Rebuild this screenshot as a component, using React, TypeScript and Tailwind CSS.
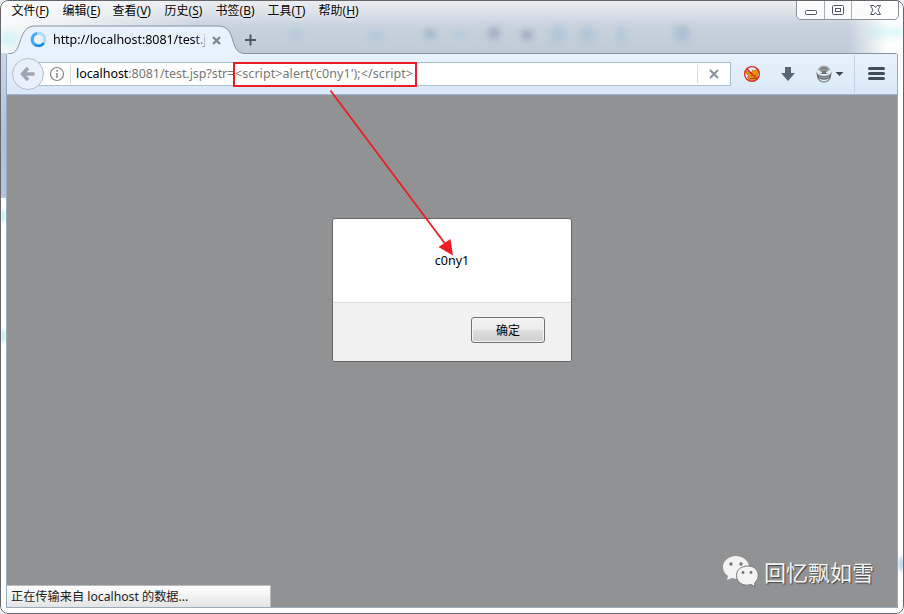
import React from "react";

const menus = [
  { label: "文件", key: "F", width: "w-[51px]" },
  { label: "编辑", key: "E", width: "w-[50px]" },
  { label: "查看", key: "V", width: "w-[52px]" },
  { label: "历史", key: "S", width: "w-[51px]" },
  { label: "书签", key: "B", width: "w-[52px]" },
  { label: "工具", key: "T", width: "w-[51px]" },
  { label: "帮助", key: "H", width: "w-[52px]" },
];

const glows = [
  "left-[290px] top-[27px] w-3 h-3 bg-[#9bbfda]/30",
  "left-[368px] top-[31px] w-4 h-2 bg-[#9bbfda]/40",
  "left-[424px] top-[30px] w-3 h-2 bg-[#8fa5bf]/70",
  "left-[454px] top-[32px] w-3 h-1 bg-[#9bbfda]/60",
  "left-[488px] top-[27px] w-3 h-3 bg-[#8795b0]/60",
  "left-[521px] top-[31px] w-3 h-2 bg-[#8795b0]/70",
  "left-[550px] top-[26px] w-4 h-4 bg-[#9fbdd5]/50",
  "left-[579px] top-[26px] w-4 h-4 bg-[#9fbdd5]/50",
  "left-[617px] top-[26px] w-2 h-4 bg-[#9fbdd5]/50",
  "left-[674px] top-[25px] w-4 h-4 bg-[#94afc9]/50",
];

function MenuBar() {
  return (
    <div className="flex h-[22px] pl-[11.500px] text-[12px] leading-[22px] text-black [text-shadow:0_0_5px_white]">
      {menus.map((m) => (
        <div key={m.key} className={`${m.width} shrink-0 whitespace-nowrap`}>
          {m.label}(<span className="underline underline-offset-2">{m.key}</span>)
        </div>
      ))}
    </div>
  );
}

function WindowButtons() {
  return (
    <div className="absolute right-[5px] top-0 z-10 flex h-[20px] w-[103px] rounded-b-[5px] border border-[#8b929b] bg-white/85">
      <div className="w-[28px] border-r border-[#a9b0b8]">
        <svg width="27" height="18"><rect x="8.5" y="9.500" width="11" height="4" rx="1" fill="white" stroke="#505668" /></svg>
      </div>
      <div className="w-[27px] border-r border-[#a9b0b8]">
        <svg width="26" height="18" fill="white" stroke="#505668"><rect x="7.500" y="4.500" width="11" height="9" rx="1" /><rect x="10.500" y="7.500" width="5" height="3" /></svg>
      </div>
      <div className="grow">
        <svg width="46" height="18"><path d="M18.500 4.500H22L23.500 6.500L25 4.500H28.500L26 9L28.500 13.500H25L23.500 11.500L22 13.500H18.500L21 9Z" fill="white" stroke="#505668" /></svg>
      </div>
    </div>
  );
}

function TabStrip() {
  return (
    <div className="relative flex h-[32px] items-center">
      <svg className="absolute left-0 top-0" width="904" height="32">
        <path d="M6 32C6.500 31.500 7 31.500 10 31.500C23 31.500 17 4 35 4H218C238 4 228 31.500 245 31.500H895Q898 31.500 898 34V36H6Z" fill="#e8f2fc" />
        <path d="M6.500 34Q6.500 31.500 10 31.500C23 31.500 17 4 35 4H218C238 4 228 31.500 245 31.500H895Q898 31.500 898 34" fill="none" stroke="#87929e" />
      </svg>
      <div className="relative flex items-center pl-[30px] pt-[4px]">
        <svg width="18" height="18" viewBox="0 0 18 18" fill="none" strokeWidth="3">
          <circle cx="8.500" cy="8.500" r="6.300" stroke="#b3dbfb" />
          <path d="M7 2.400A6.300 6.300 0 0 0 6 14.300" stroke="#45a7f5" />
          <path d="M5 13.700A6.300 6.300 0 0 0 13.800 12" stroke="#168aeb" strokeWidth="2.500" />
        </svg>
        <span className="ml-[5px] w-[152px] whitespace-nowrap text-[12.500px] leading-[18px] tracking-[-0.060px] text-black [mask-image:linear-gradient(to_right,black_93%,transparent_103%)]">
          http://localhost:8081/test.j
        </span>
        <svg className="ml-[6px]" width="11" height="11"><path d="M2 2L9 9M9 2L2 9" stroke="#7a8897" strokeWidth="2.300" /></svg>
        <svg className="ml-[22px]" width="14" height="14"><path d="M6.500 1.500V12.500M1 7H12" stroke="#4c5866" strokeWidth="2" /></svg>
      </div>
    </div>
  );
}

function BlockedIcon() {
  return (
    <svg width="18" height="18" viewBox="0 0 18 18">
      <path d="M3 6L6 7L7 9L9 7L9.500 5L11 6L13 5L14 3.500L15.500 7L14.500 10L15 13L11 15.500L6 15L4.500 12L6 10L3.500 9Z" fill="#ed930d" stroke="#b76212" strokeWidth=".7" />
      <path d="M8 11H9.500M12 10H13M7 13.500H12" stroke="#8c4b1b" />
      <circle cx="9" cy="9" r="7.400" fill="none" stroke="#d92921" strokeWidth="1.300" />
      <path d="M3.700 3.700L14.300 14.300" stroke="#d92921" strokeWidth="1.500" />
    </svg>
  );
}

function NavBar() {
  return (
    <div className="flex h-[41px] items-center border-b border-[#9bb5d0] bg-linear-to-b from-[#e8f2fc] to-[#dae9f7]">
      <div className="relative z-10 ml-[5px] flex size-[32px] shrink-0 items-center justify-center rounded-full border border-[#b2bfcd] bg-[#e8f0f9]">
        <svg width="18" height="18"><path d="M9 3L3.500 9L9 15M4 9H15.500" fill="none" stroke="#9ea7b1" strokeWidth="3.500" /></svg>
      </div>
      <div className="-ml-[5px] flex h-[24px] w-[692px] shrink-0 items-center border border-[#a9bed2] bg-white">
        <svg className="ml-[9px]" width="16" height="16" fill="none" stroke="#858585"><circle cx="8" cy="8" r="6.500" strokeWidth="1.200" /><path d="M8 7V12M8 4V5.700" strokeWidth="1.500" /></svg>
        <div className="ml-[5px] h-[17px] w-px bg-[#d5d5d5]" />
        <div className="ml-[5px] w-[157px] shrink-0 whitespace-nowrap text-[12.500px] leading-[22px] tracking-[-0.060px] text-[#777]">
          <span className="text-black">localhost</span>:8081/test.jsp?str=
        </div>
        <div className="relative z-10 flex h-[25px] w-[184px] shrink-0 items-center whitespace-nowrap border-2 border-[#ed1c24] text-[12.500px] tracking-[0.080px] text-[#777]">
          &lt;script&gt;alert('c0ny1');&lt;/script&gt;
        </div>
        <div className="ml-auto h-[18px] w-px bg-[#ddd]" />
        <div className="flex w-[32px] justify-center">
          <svg width="12" height="12"><path d="M2 2L10 10M10 2L2 10" stroke="#8592a1" strokeWidth="2" /></svg>
        </div>
      </div>
      <div className="ml-[12px]"><BlockedIcon /></div>
      <svg className="ml-[19px]" width="16" height="16"><path d="M5 1H11V7H15L8 15L1 7H5Z" fill="#586574" /></svg>
      <svg className="ml-[20px]" width="30" height="18">
        <path d="M1.800 5.500Q4 1 8 1Q12 1 14.200 5.500" fill="none" stroke="#a2a5a8" strokeWidth="1.200" />
        <ellipse cx="8" cy="4.500" rx="4.500" ry="2.800" fill="#7d8082" />
        <path d="M6 6H10V8L13 9H3L6 8Z" fill="#707375" />
        <path d="M.5 6.500Q1.500 11 8 11Q14.500 11 15.500 6.500Q16 13 12 14Q8 15.500 4 14Q0 13 .5 6.500Z" fill="#686b6d" />
        <path d="M1.500 12.500Q4 17 8 17Q12 17 14.500 12.500" fill="none" stroke="#85888a" strokeWidth="1.300" />
        <path d="M4.500 5H11.500M3 12Q8 13.500 13 12" fill="none" stroke="#b4b6b8" strokeWidth=".8" />
        <path d="M19.500 7H27.500L23.500 11Z" fill="#394552" />
      </svg>
      <div className="ml-[8px] h-[38px] w-px bg-[#c4d3e1]" />
      <svg className="ml-[12.500px]" width="17" height="16"><path d="M1.500 2.500H15.500M1.500 7.500H15.500M1.500 12.500H15.500" stroke="#404d5b" strokeWidth="3" strokeLinecap="round" /></svg>
    </div>
  );
}

function AlertDialog() {
  return (
    <div className="absolute left-[325px] top-[123px] flex h-[144px] w-[240px] flex-col overflow-hidden rounded-[3px] border border-[#666] bg-white">
      <div className="flex h-[83px] items-center justify-center pt-[2px] text-[12.500px] text-black">c0ny1</div>
      <div className="flex grow items-start justify-end border-t border-[#ddd] bg-[#f1f1f1] pr-[26px] pt-[14px]">
        <button className="h-[26px] w-[74px] rounded-[3px] border border-[#707070] bg-[linear-gradient(#f3f3f3,#ebebeb_48%,#dddddd_50%,#cfcfcf)] text-[12px] leading-[23px] text-black shadow-[inset_0_0_0_1px_#f6f6f6]">确定</button>
      </div>
    </div>
  );
}

function Signature() {
  return (
    <div className="absolute left-[716px] top-[459px] flex items-center text-[#f4f4f4]">
      <svg width="37" height="36" viewBox="0 0 37 36">
        <path d="M13 2C5.500 2 0 7 0 13C0 17 2 20 5 22L4 26L9 24C17 27 27 21 26 13C26 7 20 2 13 2Z" fill="#f3f3f3" />
        <path d="M25 12C18 12 13.500 16 13.500 21.500C13.500 28 20 33 28 30.500L32 33L31.500 29C38 24 36 12 25 12Z" fill="#f3f3f3" stroke="#777" />
        <g fill="#737373"><circle cx="8" cy="10" r="1.700" /><circle cx="18" cy="10" r="1.700" /><circle cx="20" cy="18.500" r="1.400" /><circle cx="28" cy="18.500" r="1.400" /></g>
      </svg>
      <span className="ml-[4px] whitespace-nowrap text-[22px] leading-[36px] [text-shadow:1px_1px_1px_#444]">回忆飘如雪</span>
    </div>
  );
}

export default function App() {
  return (
    <div className="h-[614px] w-[904px] bg-[#eee] font-['Noto_Sans','Noto_Sans_CJK_SC',sans-serif]">
      <div className="relative h-[614px] overflow-hidden rounded-[8px] bg-white">
        <div className="absolute inset-x-0 top-0 h-[54px] bg-linear-to-b from-[#eceef1] via-[#c8d2dd] via-50% to-[#bdcad6]" />
        <div className="absolute left-0 top-0 h-[54px] w-[200px] bg-linear-to-r from-white/90 via-white/50 to-transparent" />
        <div className="absolute right-0 top-0 h-[54px] w-[55px] bg-linear-to-r from-transparent to-white to-70%" />
        <div className="absolute left-0 top-[53px] h-[145px] w-[6px] bg-linear-to-b from-[#c8d8ec] via-[#adc0dc] via-60% to-[#b5c5dd]" />
        <div className="absolute left-0 top-[32px] h-[14px] w-[18px] bg-[#b6eef4]/60 blur-[4px]" />
        <div className="absolute right-0 top-[28px] h-[8px] w-[38px] bg-[#b6eef4]/60 blur-[4px]" />
        <div className="absolute left-0 top-[210px] h-[12px] w-[6px] bg-[#c5f2f5] blur-[2px]" />
        <div className="absolute left-0 top-[330px] h-[12px] w-[6px] bg-[#c5eaf2] blur-[2px]" />
        <div className="absolute right-0 top-[558px] h-[12px] w-[5px] bg-[#a8ccef] blur-[2px]" />
        {glows.map((g) => <div key={g} className={`absolute rounded-full blur-[3px] ${g}`} />)}
        <div className="relative flex h-full flex-col">
          <MenuBar />
          <TabStrip />
          <div className="mx-[6px] flex h-[554px] flex-col border-x border-b border-[#9aabbc]">
            <NavBar />
            <div className="relative h-[512px] bg-[#919293] bg-[repeating-conic-gradient(#8f9091_0%_25%,#939495_0%_50%)] bg-size-[4px_4px]">
              <AlertDialog />
              <Signature />
              <div className="absolute bottom-0 left-0 h-[22px] w-[264px] border-r border-t border-[#bbb] bg-linear-to-b from-white to-[#e4e4e4] pl-[4px] text-[12.200px] leading-[21px] text-[#222]">正在传输来自 localhost 的数据...</div>
            </div>
          </div>
        </div>
        <WindowButtons />
        <div className="pointer-events-none absolute inset-0 z-20 rounded-[8px] border border-[#65666d]" />
        <svg className="absolute left-0 top-0 z-20" width="904" height="614">
          <path d="M330.500 90.500L446 245" stroke="#ed1c24" strokeWidth="1.800" />
          <path d="M453 255.500L438.500 247L450.500 239Z" fill="#ed1c24" />
        </svg>
      </div>
    </div>
  );
}
